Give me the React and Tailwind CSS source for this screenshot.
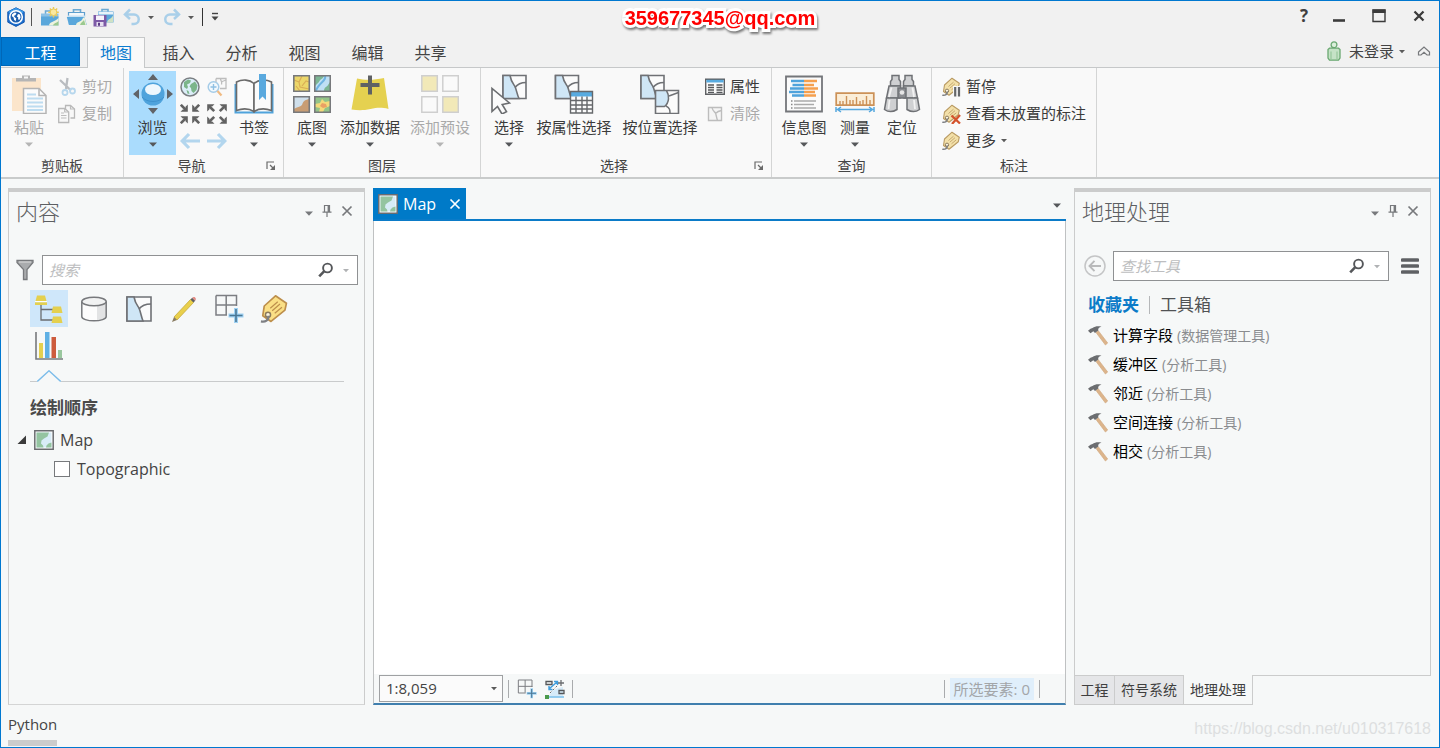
import React from "react";

const UI_FONT = "font-['Open_Sans','Noto_Sans_CJK_SC',sans-serif]";

/* ---------- shared glyphs ---------- */

function Caret({ className = "text-[#5a5a5a]", width = 8 }) {
  return (
    <svg width={width} height="5" viewBox="0 0 8 5" className={className} aria-hidden="true">
      <path d="M0 0.5h8L4 4.8z" fill="currentColor" />
    </svg>
  );
}

function Drawing({ w = 20, h = 20, children, className = "" }) {
  return (
    <svg width={w} height={h} viewBox={`0 0 ${w} ${h}`} fill="none" className={`shrink-0 ${className}`} aria-hidden="true">
      {children}
    </svg>
  );
}

/* ---------- title bar icons ---------- */

const LogoIcon = () => (
  <Drawing w={20} h={20}>
    <path d="M10 .8l8.2 4v10.4L10 19.4l-8.2-4.2V4.800z" fill="#1b6fd0" stroke="#1558ad" strokeWidth="1" />
    <path d="M10 .8l8.200 4L10 10 1.800 4.800z" fill="#3e9be8" />
    <circle cx="10" cy="10" r="6.300" fill="#1c5fae" stroke="#fff" strokeWidth="1.600" />
    <path d="M6 7.500l2.500-2 2 .6-1 1.900-1.700 1 1.300 1.500 1.200 1-.7 2.700-1.600-1.400-.4-2.300-1.700-1.200zM12 7l2 .6.600 2.900-1.300 2.500-1.300-.7.3-1.900-1.400-1z" fill="#fff" />
  </Drawing>
);

const NewProjectIcon = () => (
  <Drawing w={20} h={20}>
    <path d="M5.500 7V4h6.500v3" stroke="#6aa9d3" strokeWidth="1.500" />
    <path d="M1 6.500h17.500v4H1z" fill="#8cc1e6" />
    <path d="M1 9.500h17.500v9H1z" fill="#5aa7db" />
    <path d="M9 18.500c.5-4 5-3 9.500-7.500v7.500z" fill="#eef3df" />
    <path d="M13 18.500c1-3 3.500-2 5.500-4.500v4.500z" fill="#9bc98f" />
    <path d="M13.500 0v10.500M8.300 5.200h10.500M9.800 1.500l7.400 7.400M17.200 1.500L9.800 8.900" stroke="#ecca55" strokeWidth="1.400" />
    <circle cx="13.500" cy="5.200" r="3.300" fill="#fbe9a0" stroke="#ecca55" strokeWidth="1" />
  </Drawing>
);

const OpenProjectIcon = () => (
  <Drawing w={22} h={20}>
    <path d="M7.500 5.500V2.800h7v2.700" stroke="#6aa9d3" strokeWidth="1.600" />
    <path d="M2.500 5.500h16v4h-16z" fill="#f4f8fb" stroke="#5f9fce" strokeWidth="1.200" />
    <path d="M2 17.500V8.500h17v9z" fill="#c9e1f2" />
    <path d="M.8 10h17.700l2.300 8H3z" fill="#5aa7db" />
    <path d="M10 18c.5-4 5-2 7-7l1.500-1 2 8z" fill="#eef3df" />
    <path d="M14 18c1-3 2.500-3 4-5l1.500 5z" fill="#9bc98f" />
  </Drawing>
);

const SaveProjectIcon = () => (
  <Drawing w={22} h={20}>
    <path d="M9 4.500V2.500h6v2" stroke="#6aa9d3" strokeWidth="1.600" />
    <path d="M5 4.500h15.500v11H5z" fill="#5aa7db" />
    <path d="M5.500 5h14.500v2.500h-14.500z" fill="#e8f2f9" />
    <path d="M14 15.500c1-4 4-3 6-7v7z" fill="#cfe2c4" />
    <path d="M.5 8h13v11.500h-13z" fill="#7d5aa6" />
    <path d="M3 8.500h8v4.500H3z" fill="#f6f2fa" />
    <path d="M3.500 15h7v4h-7z" fill="#e6dff0" />
    <path d="M5 15.800h2v3H5z" fill="#5b3d85" />
  </Drawing>
);

const UndoIcon = ({ flip = false }) => (
  <Drawing w={18} h={18} className={flip ? "-scale-x-100" : ""}>
    <path d="M7 1.500L2 6.500l5 4.500M2.500 6.500H11a4.600 4.600 0 0 1 0 9.500H8.500" stroke="#a9cfe9" strokeWidth="2.500" />
  </Drawing>
);

const CustomizeIcon = () => (
  <Drawing w={8} h={10}>
    <path d="M1 1.500h6" stroke="#444" strokeWidth="1.400" />
    <path d="M0.500 4.500h7L4 8.500z" fill="#444" />
  </Drawing>
);

/* ---------- ribbon icons ---------- */

const PasteIcon = () => (
  <Drawing w={38} h={40}>
    <rect x="2" y="4" width="29" height="33" fill="#fbe5cb" />
    <path d="M6 4h20v3.500H6z" fill="#b5b5b5" />
    <path d="M12 1.500h8v5h-8z" fill="#b5b5b5" />
    <path d="M14 2.500h4v2h-4z" fill="#f8f8f8" />
    <path d="M13.500 14.500h15.500l7 7V39.500H13.500z" fill="#fbfbfb" stroke="#b4b4b4" strokeWidth="1.500" />
    <path d="M29 14.500v7h7" stroke="#b4b4b4" strokeWidth="1.500" />
    <path d="M17 20.500h9M17 24.500h16M17 28.500h16M17 32.500h16M17 36h16" stroke="#bddcf0" strokeWidth="1.800" />
  </Drawing>
);

const CutIcon = () => (
  <Drawing>
    <path d="M3 3L14 13.500M10.500 1L9 12" stroke="#b9bcc0" strokeWidth="2.300" />
    <circle cx="8" cy="15.500" r="2.500" stroke="#b7d7ed" strokeWidth="1.800" />
    <circle cx="15.500" cy="14" r="2.500" stroke="#b7d7ed" strokeWidth="1.800" />
  </Drawing>
);

const CopyIcon = () => (
  <Drawing>
    <path d="M8.500 5.500V1.500h5l4 3.500v9h-4" fill="#f8f8f8" stroke="#b8b8b8" strokeWidth="1.300" />
    <path d="M1.700 4.500h6l4 3.500v10.500h-10z" fill="#f8f8f8" stroke="#b8b8b8" strokeWidth="1.300" />
    <path d="M7.700 4.500V8h4M4 9h3M4 11.500h5.500M4 14h5.500M13.500 1.500V5h4" stroke="#bcbcbc" strokeWidth="1.200" />
  </Drawing>
);

const ExploreIcon = () => (
  <Drawing w={40} h={40}>
    <path d="M20 0l5 6H15zM20 40l5-6H15zM0 20l6-5v10zM40 20l-6-5v10z" fill="#616468" />
    <circle cx="20" cy="20" r="11.500" fill="#4fa3dc" />
    <ellipse cx="20" cy="15.500" rx="8" ry="5.500" fill="#eef7fd" />
    <path d="M9 23c5 6 17 6 22 0" stroke="#3f92cd" strokeWidth="1" />
  </Drawing>
);

const GlobeIcon = () => (
  <Drawing>
    <circle cx="10" cy="10" r="9" fill="#dceef8" stroke="#7b7f83" strokeWidth="1.500" />
    <path d="M4 5l4-2.500 3 1-1 2.500-3 1.500L8 10l-1 2-3-2zM11 7l4-2.500 2.500 4-1 4.500-3 3-2-2-.5-3-1.500-1.500zM6.500 13l2 1 1 3-2-.5z" fill="#7cb58a" />
  </Drawing>
);

const ZoomSelectionIcon = () => (
  <Drawing>
    <path d="M9 1.500h10v10H13M9 1.500V5M13.500 1.500c0 3 2 2 1 6M14 5l5-2" stroke="#bdbdbd" strokeWidth="1.300" />
    <circle cx="6.500" cy="10" r="5.300" fill="#f3f9fd" stroke="#a5cce8" strokeWidth="1.500" />
    <path d="M6.500 7v6M3.500 10h6" stroke="#8fc0e3" strokeWidth="1.400" />
    <path d="M10.500 14l4 4.500" stroke="#f0ba82" strokeWidth="2.200" />
  </Drawing>
);

function CornerArrow({ turn }) {
  return (
    <g transform={turn}>
      <path d="M.8.8L6 6" stroke="#626262" strokeWidth="2.600" />
      <path d="M7.800.5v7.300H.5l2.300-2.300L5.500 5.500V2.800z" fill="#626262" />
    </g>
  );
}

const FixedZoomInIcon = () => (
  <Drawing>
    <CornerArrow turn="translate(0 0)" />
    <CornerArrow turn="translate(20 0) scale(-1 1)" />
    <CornerArrow turn="translate(0 20) scale(1 -1)" />
    <CornerArrow turn="translate(20 20) scale(-1 -1)" />
  </Drawing>
);

const FixedZoomOutIcon = () => (
  <Drawing>
    <CornerArrow turn="translate(8 8) scale(-1 -1)" />
    <CornerArrow turn="translate(12 8) scale(1 -1)" />
    <CornerArrow turn="translate(8 12) scale(-1 1)" />
    <CornerArrow turn="translate(12 12)" />
  </Drawing>
);

const ArrowIcon = ({ flip = false }) => (
  <Drawing className={flip ? "-scale-x-100" : ""}>
    <path d="M9 3L2.200 10 9 17M2.500 10H20" stroke="#b3d6ee" strokeWidth="3.200" />
  </Drawing>
);

const BookmarkIcon = () => (
  <Drawing w={40} h={40}>
    <path d="M1.500 10v28.500H38.500V10" stroke="#4fa3dc" strokeWidth="2" />
    <path d="M2.500 8c6-3 13-2.500 17.500 1.500v28C15 34.500 8 34.500 2.500 36.500z" fill="#fbfbfb" stroke="#6b6b6b" strokeWidth="1.600" />
    <path d="M37.500 8c-6-3-13-2.500-17.500 1.500v28c5-3 12-3 17.500-1z" fill="#fbfbfb" stroke="#6b6b6b" strokeWidth="1.600" />
    <path d="M25 0h7v26l-3.500-3.500L25 26z" fill="#5aa9de" />
  </Drawing>
);

const BasemapIcon = () => (
  <Drawing w={38} h={40}>
    <rect x=".8" y="1.800" width="15.500" height="15.500" fill="#ecd76a" />
    <path d="M1 6l5 2 3-6M6 8l1 5 9 2M9 12l4-5 3 1M3 12l4 5" stroke="#d9ad55" strokeWidth="1.200" />
    <rect x="21.800" y="1.800" width="15.500" height="15.500" fill="#bfe0f5" />
    <path d="M22 2h9c-1 3-4 3-5 6l-4 4zM37 8v9h-6c0-4 3-4 4-6z" fill="#7cb694" />
    <path d="M32 2c2 5-7 7-9 15" stroke="#6fb4e2" strokeWidth="2" />
    <rect x=".8" y="22.800" width="15.500" height="15.500" fill="#c89d74" />
    <path d="M1 23h15v2c-5 1-6 3-7 6-2 2-5 2-8 4z" fill="#cfdfeb" />
    <rect x="21.800" y="22.800" width="15.500" height="15.500" fill="#93c489" />
    <path d="M22 30l5-1 2-4 3 3 5-1v5l-5 2-2 4h-4l1-4-5-1z" fill="#f3da7a" />
    <path d="M27 32l2-3 4 1 1 3-4 1z" fill="#eaa064" />
    <path d="M.8 1.800h15.500v15.500H.8zM21.800 1.800h15.500v15.500H21.800zM.8 22.800h15.500v15.500H.8zM21.800 22.800h15.500v15.500H21.800z" stroke="#77797c" strokeWidth="1.600" />
  </Drawing>
);

const AddDataIcon = () => (
  <Drawing w={38} h={40}>
    <path d="M6 4.500c9 2 17 1.500 27-.5L37.500 35c-8-2-12-1-18 0-7 1.500-12 1.500-19 .5z" fill="#e5d150" />
    <path d="M19 1.500v19M9.500 11h19" stroke="#5f6164" strokeWidth="4" />
  </Drawing>
);

const PresetIcon = () => (
  <Drawing w={38} h={40}>
    <g stroke="#cfcfcf" strokeWidth="1.500">
      <path d="M.8 1.800h15.500v15.500H.8z" fill="#f2e9b8" />
      <path d="M21.800 1.800h15.500v15.500H21.800z" fill="#fafafa" />
      <path d="M.8 22.800h15.500v15.500H.8z" fill="#fafafa" />
      <path d="M21.800 22.800h15.500v15.500H21.800z" fill="#f2e9b8" />
    </g>
  </Drawing>
);

function Parcel({ x = 0, y = 0, s = 24 }) {
  return (
    <g transform={`translate(${x} ${y})`} strokeWidth="1.600" stroke="#6f7175">
      <path d={`M0 0h${s}v${s}H0z`} fill="#fbfbfb" />
      <path d={`M0 0h7c1 6 3 8 5 11 2 5 2 8 4 ${s - 11}H0z`} fill="#cfe6f6" />
      <path d={`M12 12c3-4 6-5 ${s - 12}-5`} />
    </g>
  );
}

const SelectIcon = () => (
  <Drawing w={38} h={40}>
    <Parcel x={13} y={1.5} s={23} />
    <path d="M2 14.500v23l5.500-5 4.500 7.500 4.500-2.300-4.300-7.200 7.300-1.500z" fill="#fbfbfb" stroke="#6b6d70" strokeWidth="1.600" />
  </Drawing>
);

const SelectAttrIcon = () => (
  <Drawing w={40} h={40}>
    <Parcel x={1.5} y={1.5} s={23} />
    <path d="M16 17h23v22H16z" fill="#fbfbfb" />
    <path d="M16 17h23v5.500H16z" fill="#58abe0" />
    <path d="M16.500 17.500h22v21.500h-22zM16.500 26.500h22M16.500 31h22M16.500 35h22M22 22.500V39M28 22.500V39M33 22.500V39" stroke="#66686b" strokeWidth="1.400" />
  </Drawing>
);

const SelectLocIcon = () => (
  <Drawing w={40} h={40}>
    <Parcel x={1} y={1.5} s={23} />
    <path d="M15.500 16.500h23v23h-23z" fill="#fbfbfb" />
    <path d="M15.500 16.500h11c3 4 3 12-2 16h-9z" fill="#cfe6f6" />
    <path d="M26.500 16.500c3 5 3 12-2 16h-9M29 22l9.500-3.500M26 32c4 2 4 4 4 7.500" stroke="#6f7175" strokeWidth="1.500" />
    <path d="M15.500 16.500h23v23h-23z" stroke="#6f7175" strokeWidth="1.600" />
  </Drawing>
);

const AttributesIcon = () => (
  <Drawing>
    <path d="M.7 2.200h18.600v15H.7z" fill="#fbfbfb" stroke="#5f6164" strokeWidth="1.400" />
    <path d="M1.400 2.800h17.200v2.700H1.400z" fill="#58abe0" />
    <path d="M3 8h6M3 10.500h6M3 13h6M3 15.300h6M11.500 8h6M11.500 10.500h6M11.500 13h6M11.500 15.300h6" stroke="#55575a" strokeWidth="1.300" />
  </Drawing>
);

const ClearIcon = () => (
  <Drawing>
    <path d="M3.500 3.500h13v13h-13z" fill="#f5f5f5" stroke="#bdbdbd" strokeWidth="1.400" />
    <path d="M7 3.500c.5 3 2 4 3.500 5.500 1 3 1 5 2 7.500M10.500 9.500c2-2 3-2.500 6-3" stroke="#bdbdbd" strokeWidth="1.400" />
  </Drawing>
);

const InfographicIcon = () => (
  <Drawing w={38} h={40}>
    <path d="M1 2.500h36v35H1z" fill="#fbfbfb" stroke="#74767a" strokeWidth="1.800" />
    <path d="M6 7h13M7.500 11h11.500M5 14.500h14M4 18h15M7 21.500h12" stroke="#4fa3dc" strokeWidth="2.600" />
    <path d="M19 7h13M19 11h10M19 14.500h14M19 18h11M19 21.500h12" stroke="#f5a04f" strokeWidth="2.600" />
    <path d="M9 27h22M9 30.500h20M9 34h22" stroke="#aaa" strokeWidth="1.300" />
    <path d="M6 27h1.500M6 30.500h1.500M6 34h1.500" stroke="#888" strokeWidth="1.500" />
  </Drawing>
);

const MeasureIcon = () => (
  <Drawing w={40} h={40}>
    <path d="M1.200 19.200h37.600v12H1.200z" fill="#fbeed8" stroke="#cc9157" strokeWidth="1.700" />
    <path d="M5 31v-4M8 31v-4M11.500 31v-9M15 31v-5M18 31v-5M21.500 31v-8M25 31v-4M28 31v-5M31.500 31v-9M35 31v-5" stroke="#cc9157" strokeWidth="1.400" />
    <path d="M2 35.500h36M1 33v5M39 33v5M6 33l-3.500 2.500L6 38M34 33l3.500 2.500L34 38" stroke="#56a8de" strokeWidth="1.500" />
  </Drawing>
);

const BinocularsIcon = () => (
  <Drawing w={38} h={40}>
    <g fill="#cfd0d2" stroke="#6f7175" strokeWidth="1.500">
      <path d="M9 1.500h7v4l1.500 2V12H7.500V7.500L9 5.500zM22 1.500h7v4l1.500 2V12H20.500V7.500L22 5.500z" />
      <path d="M6 12h11.500l-.5 12H3.500zM20.500 12H32l2.500 12H21z" />
      <path d="M3.500 24H14v11.500c-4 2.500-9 2.500-12.500 0zM24 24h10.500l2 11.500c-3.500 2.500-8.500 2.500-12.500 0z" />
      <path d="M15 14h8v10h-8z" fill="#8a8c90" />
    </g>
    <circle cx="19" cy="18.500" r="2.300" fill="#e6e6e6" />
    <path d="M8.500 13.500L6 23M29.500 13.500L31 23M6.500 26l-1 9M31 26l1 9" stroke="#f2f2f2" strokeWidth="1.800" />
  </Drawing>
);

function TagShape({ s = 20, fill = "#f3e0a9", edge = "#b99a62" }) {
  return (
    <g transform={`scale(${s / 20})`}>
      <path d="M11 1.200l7.300 5-1 4.500L8 18.300 2.500 14.500 3.500 8z" fill={fill} stroke={edge} strokeWidth="1.100" strokeLinejoin="round" />
      <path d="M7.500 9.500L12.500 5.200M8.800 11.200l5.200-4.500M10.500 12.800l4.800-4" stroke={edge} strokeWidth=".8" />
      <circle cx="6" cy="13.800" r="1.700" fill="#fbf4de" stroke="#8b7a5c" strokeWidth="1" />
      <path d="M6.300 14.500c.2 3-2 4.300-5 3.700" stroke="#7e8084" strokeWidth="1.500" />
    </g>
  );
}

const PauseLabelIcon = () => (
  <Drawing>
    <TagShape />
    <path d="M12 9h8v11h-8z" fill="#f8f8f8" />
    <path d="M14.200 10v9.500M18 10v9.500" stroke="#66686b" strokeWidth="2.200" />
  </Drawing>
);

const UnplacedLabelIcon = () => (
  <Drawing>
    <TagShape />
    <path d="M10.500 11.500l8.500 8M19 11l-8 9" stroke="#d4532c" strokeWidth="2.300" />
  </Drawing>
);

const TagIcon = () => (
  <Drawing>
    <TagShape />
  </Drawing>
);

const LauncherIcon = () => (
  <Drawing w={10} h={10}>
    <path d="M1 8V1h7" stroke="#6a6a6a" strokeWidth="1.200" />
    <path d="M4 4l3.500 3.500" stroke="#6a6a6a" strokeWidth="1.300" />
    <path d="M9 4v5H4z" fill="#6a6a6a" />
  </Drawing>
);

/* ---------- pane icons ---------- */

const PinIcon = () => (
  <Drawing w={10} h={14}>
    <path d="M2.500 1.500h5v6.500h-5zM.5 8.200h9M5 8v5" stroke="#77797c" strokeWidth="1.200" />
    <path d="M6.500 1.500v6.500" stroke="#77797c" strokeWidth="1.800" />
  </Drawing>
);

const CrossIcon = ({ color = "#77797c" }) => (
  <Drawing w={12} h={12}>
    <path d="M1.500 1.500l9 9M10.500 1.500l-9 9" stroke={color} strokeWidth="1.700" />
  </Drawing>
);

const FilterIcon = () => (
  <Drawing w={18} h={22}>
    <path d="M1 1.500h16v2L11 10.500v10H7.500v-10L1 3.500z" fill="#a9abad" stroke="#77797c" strokeWidth="1.300" />
    <path d="M3 3h12" stroke="#ddd" strokeWidth="1" />
  </Drawing>
);

const SearchIcon = () => (
  <Drawing w={16} h={16}>
    <circle cx="9.500" cy="6" r="4.400" stroke="#55575a" strokeWidth="1.900" />
    <path d="M6.300 9.200L1.200 14.300" stroke="#55575a" strokeWidth="2.600" />
  </Drawing>
);

const LayerTreeIcon = () => (
  <Drawing w={30} h={30}>
    <path d="M7 11v15h12M7 15.500h12" stroke="#6b6d70" strokeWidth="1.300" />
    <g fill="#e4d04f">
      <path d="M3 1.500h8l1.500 5.500H1.500zM1 8.200h12V11H1zM19 12.500h8l1.500 6.500H17.500zM19 22.500h8l1.500 6.500H17.500z" />
    </g>
    <path d="M1 7.600h12" stroke="#fff" strokeWidth="1" />
  </Drawing>
);

const CylinderIcon = () => (
  <Drawing w={28} h={28}>
    <path d="M1.800 6.500v15c0 2.500 5.500 4.300 12 4.300s12.400-1.800 12.400-4.300v-15" fill="#fcfcfc" />
    <path d="M17 11c5-.5 9.200-2 9.200-4.500v15c0 2.500-4 3.800-9.200 4.200z" fill="#e2e3e4" />
    <path d="M1.800 6.500v15c0 2.500 5.500 4.300 12.200 4.300s12.200-1.800 12.200-4.300v-15" stroke="#77797c" strokeWidth="1.500" />
    <ellipse cx="14" cy="6.500" rx="12.200" ry="4.300" fill="#f1f2f2" stroke="#77797c" strokeWidth="1.500" />
  </Drawing>
);

const ParcelIcon = () => (
  <Drawing w={28} h={28}>
    <Parcel x={2} y={2} s={24} />
  </Drawing>
);

const PencilIcon = () => (
  <Drawing w={28} h={28}>
    <path d="M4 22L20.500 4.500l3 3L7 25z" fill="#e9d04c" stroke="#c6a93b" strokeWidth=".8" />
    <path d="M2 27l2-5L7 25z" fill="#8a7d63" />
    <path d="M20.500 4.500l1.700-1.700 3 3-1.700 1.700z" fill="#5e6063" />
    <path d="M22.200 2.800c2-2 5 .7 3 3z" fill="#e38a83" />
  </Drawing>
);

const SnapIcon = ({ s = 30 }) => (
  <svg width={s} height={s} viewBox="0 0 30 30" fill="none" aria-hidden="true" className="shrink-0">
    <path d="M2 1.500h20.500v10.500M2 1.500V21h11M12.200 1.500v19M2 11h20.500v1" stroke="#7c7e82" strokeWidth="1.500" />
    <path d="M22 14v15M14.500 21.500h15" stroke="#9fd2f3" strokeWidth="4" />
    <path d="M22 15v13M15.500 21.500h13" stroke="#4a7795" strokeWidth="1.600" />
  </svg>
);

const LabelTagIcon = () => (
  <Drawing w={30} h={30}>
    <TagShape s={30} fill="#fadf85" edge="#bd8f4c" />
  </Drawing>
);

const ChartIcon = () => (
  <Drawing w={30} h={30}>
    <path d="M2 1v27h27" stroke="#77797c" strokeWidth="1.600" />
    <path d="M5 12h4v15H5z" fill="#e4d04f" />
    <path d="M11 1h4.500v26H11z" fill="#5fb0e4" />
    <path d="M17.500 6H22v21h-4.500z" fill="#cd5b3c" />
    <path d="M24 19h4v8h-4z" fill="#9ac79e" />
  </Drawing>
);

const MapThumb = () => (
  <Drawing w={20} h={20}>
    <path d="M.8.8h18.400v18.400H.8z" fill="#fff" stroke="#6b6d70" strokeWidth="1.500" />
    <path d="M2.500 2.500h15v15h-15z" fill="#d8ecf7" />
    <path d="M2.500 2.500h12.500l-1.500 4-3.500 2-2.500 2-.5 3 2 2 .5 2h-7zM14.500 13.500l3-1v5h-5.500l.5-2z" fill="#94c4a0" />
  </Drawing>
);

const BackIcon = () => (
  <Drawing w={22} h={22}>
    <circle cx="11" cy="11" r="10" stroke="#c4c5c6" strokeWidth="1.500" />
    <path d="M10.500 5.800L5.500 11l5 5.200M6 11h11" stroke="#b9babb" strokeWidth="1.900" />
  </Drawing>
);

const HammerIcon = () => (
  <Drawing>
    <path d="M8 6.500l2.300-1.800 9.400 12.300-2.300 2z" fill="#dcb48b" stroke="#cfa67b" strokeWidth=".6" />
    <path d="M4.500 2C7 .2 10.500 0 13.500.8 11 1.300 9.800 2.600 10.300 4.600L7 7 5.300 5.200 2.500 7.200 0 4.800 2.500 2.800z" fill="#6b6d70" />
  </Drawing>
);

const ConstraintIcon = () => (
  <Drawing w={20} h={20}>
    <path d="M4 18c2-7 8-9 14-10v10z" fill="#d6ebf9" />
    <path d="M1 2.500h6v3H1zM14 11.500h5v3h-5z" stroke="#55575a" strokeWidth="1.300" />
    <path d="M4 10l8-7M9 2.500h3.500V6M4 7v3.500h3.500" stroke="#3f9ddd" strokeWidth="1.400" />
    <path d="M16 1v6M13 4h6" stroke="#6b6d70" strokeWidth="1.300" />
    <path d="M5 14l8-8" stroke="#6b6d70" strokeWidth="1" strokeDasharray="2 2" />
    <path d="M3 18h16" stroke="#8cc8ee" strokeWidth="1.800" />
    <path d="M0 16h4v4H0z" fill="#4b9a4b" />
  </Drawing>
);

const PersonIcon = () => (
  <Drawing w={14} h={20}>
    <circle cx="7" cy="3.800" r="2.900" fill="#dcefdc" stroke="#6aa871" strokeWidth="1.300" />
    <path d="M1 8.500l1.500-1.300h9L13 8.500V17l-1.500 2.200h-9L1 17z" fill="#c5e2c6" stroke="#6aa871" strokeWidth="1.300" />
    <path d="M4 10.500V18M10 10.500V18" stroke="#8dc192" strokeWidth="1" />
  </Drawing>
);

/* ---------- ribbon building blocks ---------- */

function BigButton({ icon, label, width, disabled, active, arrow = true }) {
  return (
    <button
      type="button"
      disabled={disabled}
      className={`flex h-[84px] shrink-0 flex-col items-center pt-[3px] ${width} ${active ? "bg-[#aadcfd]" : ""} ${
        disabled ? "text-[#a9a9a9]" : "text-[#3b3b3b]"
      }`}
    >
      <span className="flex h-10 items-center">{icon}</span>
      <span className="mt-px h-6 whitespace-nowrap leading-6">{label}</span>
      {arrow && (
        <span className="mt-px flex h-2 items-center">
          <Caret className={disabled ? "text-[#b5b5b5]" : "text-[#55575a]"} />
        </span>
      )}
    </button>
  );
}

function SmallButton({ icon, label, disabled, arrow }) {
  return (
    <button
      type="button"
      disabled={disabled}
      className={`flex h-[27px] items-center gap-[5px] whitespace-nowrap ${disabled ? "text-[#a9a9a9]" : "text-[#3b3b3b]"}`}
    >
      {icon}
      <span>{label}</span>
      {arrow && <Caret width={6} />}
    </button>
  );
}

function RibbonGroup({ name, width, inset, launcher, children }) {
  return (
    <section aria-label={name} className={`flex shrink-0 flex-col border-r border-[#d4d5d5] ${width}`}>
      <div className={`flex flex-1 items-start pt-[3px] ${inset}`}>{children}</div>
      <div className="flex h-[22px] items-center text-sm text-[#444]">
        <span className="flex-1 text-center">{name}</span>
        {launcher && (
          <button type="button" aria-label={`${name}选项`} className="flex w-6 justify-center">
            <LauncherIcon />
          </button>
        )}
      </div>
    </section>
  );
}

function IconButton({ label, className = "", children }) {
  return (
    <button type="button" aria-label={label} className={`flex shrink-0 items-center justify-center ${className}`}>
      {children}
    </button>
  );
}

function TitleBar() {
  return (
    <header className="grid h-9 grid-cols-[1fr_auto_1fr] items-start">
      <div className="flex h-8 items-center pl-[5px]">
        <LogoIcon />
        <span className="ml-[5px] mr-2 h-[18px] w-px bg-[#555]" />
        <IconButton label="新建工程" className="w-[20px]"><NewProjectIcon /></IconButton>
        <IconButton label="打开工程" className="ml-[6px] w-[22px]"><OpenProjectIcon /></IconButton>
        <IconButton label="保存工程" className="ml-[5px] w-[22px]"><SaveProjectIcon /></IconButton>
        <IconButton label="撤销" className="ml-2 w-[18px]"><UndoIcon /></IconButton>
        <IconButton label="撤销列表" className="ml-[7px] w-[6px]"><Caret width={6} /></IconButton>
        <IconButton label="恢复" className="ml-[9px] w-[18px]"><UndoIcon flip /></IconButton>
        <IconButton label="恢复列表" className="ml-[7px] w-[6px]"><Caret width={6} /></IconButton>
        <span className="ml-2 mr-2 h-[18px] w-px bg-[#333]" />
        <IconButton label="自定义快速访问工具栏"><CustomizeIcon /></IconButton>
      </div>
      <div className="pt-1 font-['Liberation_Sans',sans-serif] text-[20px] font-bold leading-[26px] text-[#ff0000] [paint-order:stroke_fill] [-webkit-text-stroke:6px_white] drop-shadow-[1px_2px_1px_rgba(0,0,0,0.5)]">
        359677345@qq.com
      </div>
      <div className="flex h-[30px] items-center justify-end">
        <IconButton label="帮助" className="w-[30px] text-[17px] font-bold text-[#3f3f3f]">?</IconButton>
        <IconButton label="最小化" className="w-10">
          <Drawing w={12} h={12}><path d="M0 10.500h12" stroke="#3b3b3b" strokeWidth="2.600" /></Drawing>
        </IconButton>
        <IconButton label="最大化" className="w-10">
          <Drawing w={14} h={14}><path d="M1 1h12v11.500H1z" stroke="#3b3b3b" strokeWidth="1.400" /><path d="M.5.500h13V4H.5z" fill="#3b3b3b" /></Drawing>
        </IconButton>
        <IconButton label="关闭" className="w-10">
          <Drawing w={12} h={12}><path d="M1.500 1.500l9 9M10.500 1.500l-9 9" stroke="#3b3b3b" strokeWidth="2.300" /></Drawing>
        </IconButton>
      </div>
    </header>
  );
}

function TabStrip() {
  return (
    <nav className="flex h-[31px] items-stretch border-b border-[#c6c8c9] text-base text-[#444]">
      <button type="button" className="mb-px w-[79px] border border-[#0067b8] bg-[#0078d0] pt-0.5 text-white">工程</button>
      <button type="button" className="relative z-10 -mb-px ml-[7px] w-[58px] border border-b-0 border-[#c6c8c9] bg-[#f9f9f9] text-[#0b7bd0]">地图</button>
      <div className="ml-[2px] flex pt-0.5">
        {["插入", "分析", "视图", "编辑", "共享"].map((t) => (
          <button key={t} type="button" className="w-[63px]">{t}</button>
        ))}
      </div>
      <div className="-mt-0.5 ml-auto flex items-center pr-2 text-[15px]">
        <button type="button" className="flex items-center">
          <PersonIcon />
          <span className="ml-2">未登录</span>
          <span className="ml-[5px]"><Caret width={6} /></span>
        </button>
        <IconButton label="折叠功能区" className="ml-3">
          <Drawing w={14} h={12}>
            <path d="M1.500 7L7 2l5.500 5v3H10L7 7.200 4 10H1.500z" stroke="#77797c" strokeWidth="1.200" />
          </Drawing>
        </IconButton>
      </div>
    </nav>
  );
}

function Ribbon() {
  return (
    <div className="flex h-[111px] border-b-2 border-[#c9cbcb] bg-[#f9f9f9] text-[15px]">
      <RibbonGroup name="剪贴板" width="w-[123px]" inset="pl-[7px]">
        <BigButton icon={<PasteIcon />} label="粘贴" width="w-[42px]" disabled />
        <div className="ml-[7px] mt-0.5 flex flex-col">
          <SmallButton icon={<CutIcon />} label="剪切" disabled />
          <SmallButton icon={<CopyIcon />} label="复制" disabled />
        </div>
      </RibbonGroup>
      <RibbonGroup name="导航" width="w-[160px]" inset="pl-[5px]" launcher>
        <BigButton icon={<ExploreIcon />} label="浏览" width="w-[47px]" active />
        <div className="ml-1 mt-0.5 grid grid-cols-[20px_20px] gap-x-[7px]">
          <IconButton label="全图" className="h-[27px]"><GlobeIcon /></IconButton>
          <IconButton label="缩放至所选" className="h-[27px]"><ZoomSelectionIcon /></IconButton>
          <IconButton label="固定比例放大" className="h-[27px]"><FixedZoomInIcon /></IconButton>
          <IconButton label="固定比例缩小" className="h-[27px]"><FixedZoomOutIcon /></IconButton>
          <IconButton label="上一视图" className="h-[27px]"><ArrowIcon /></IconButton>
          <IconButton label="下一视图" className="h-[27px]"><ArrowIcon flip /></IconButton>
        </div>
        <div className="ml-[6px]">
          <BigButton icon={<BookmarkIcon />} label="书签" width="w-[42px]" />
        </div>
      </RibbonGroup>
      <RibbonGroup name="图层" width="w-[197px]" inset="pl-[7px]">
        <div className="flex gap-1">
          <BigButton icon={<BasemapIcon />} label="底图" width="w-[42px]" />
          <BigButton icon={<AddDataIcon />} label="添加数据" width="w-[66px]" />
          <BigButton icon={<PresetIcon />} label="添加预设" width="w-[66px]" disabled />
        </div>
      </RibbonGroup>
      <RibbonGroup name="选择" width="w-[291px]" inset="pl-[9px]" launcher>
        <div className="flex gap-[6px]">
          <BigButton icon={<SelectIcon />} label="选择" width="w-[38px]" />
          <BigButton icon={<SelectAttrIcon />} label="按属性选择" width="w-[80px]" arrow={false} />
          <BigButton icon={<SelectLocIcon />} label="按位置选择" width="w-[80px]" arrow={false} />
        </div>
        <div className="ml-[5px] mt-0.5 flex flex-col">
          <SmallButton icon={<AttributesIcon />} label="属性" />
          <SmallButton icon={<ClearIcon />} label="清除" disabled />
        </div>
      </RibbonGroup>
      <RibbonGroup name="查询" width="w-[160px]" inset="pl-2">
        <div className="flex gap-[7px]">
          <BigButton icon={<InfographicIcon />} label="信息图" width="w-[48px]" />
          <BigButton icon={<MeasureIcon />} label="测量" width="w-[40px]" />
          <BigButton icon={<BinocularsIcon />} label="定位" width="w-[40px]" arrow={false} />
        </div>
      </RibbonGroup>
      <RibbonGroup name="标注" width="w-[165px]" inset="pl-[9px]">
        <div className="mt-0.5 flex flex-col">
          <SmallButton icon={<PauseLabelIcon />} label="暂停" />
          <SmallButton icon={<UnplacedLabelIcon />} label="查看未放置的标注" />
          <SmallButton icon={<TagIcon />} label="更多" arrow />
        </div>
      </RibbonGroup>
    </div>
  );
}

function PaneHeader({ title }) {
  return (
    <div className="flex h-[38px] items-center pl-[7px] pr-[11px]">
      <h2 className="flex-1 text-[22px] font-light leading-9 text-[#5d5f62]">{title}</h2>
      <IconButton label={`${title}菜单`} className="pt-1"><Caret className="text-[#77797c]" width={10} /></IconButton>
      <IconButton label="自动隐藏" className="ml-2"><PinIcon /></IconButton>
      <IconButton label={`关闭${title}`} className="ml-[9px]"><CrossIcon /></IconButton>
    </div>
  );
}

function SearchBox({ label }) {
  return (
    <div className="flex h-[30px] min-w-0 flex-1 items-center border border-[#8f9193] bg-white pl-[6px] pr-2">
      <input
        type="text"
        aria-label={label}
        placeholder={label}
        className="h-7 min-w-0 flex-1 bg-transparent text-[15px] italic leading-7 text-[#444] outline-none placeholder:text-[#bdbec0]"
      />
      <IconButton label={`执行${label}`}><SearchIcon /></IconButton>
      <IconButton label="搜索选项" className="ml-[9px]"><Caret width={6} className="text-[#b0b2b4]" /></IconButton>
    </div>
  );
}

const VIEWS = [
  ["按绘制顺序列出", LayerTreeIcon],
  ["按数据源列出", CylinderIcon],
  ["按选择列出", ParcelIcon],
  ["按编辑列出", PencilIcon],
  ["按捕捉列出", SnapIcon],
  ["按标注列出", LabelTagIcon],
  ["按图表列出", ChartIcon],
];

function ContentsPane() {
  return (
    <aside className="flex w-[357px] shrink-0 flex-col border border-t-4 border-[#cbcccc] border-b-[#d4d5d5]">
      <PaneHeader title="内容" />
      <div className="mt-[25px] flex items-center gap-2 pl-[7px] pr-[6px]">
        <IconButton label="筛选"><FilterIcon /></IconButton>
        <SearchBox label="搜索" />
      </div>
      <div className="ml-[21px] mt-[5px] flex w-[270px] flex-wrap gap-x-[7px]">
        {VIEWS.map(([label, Icon], i) => (
          <IconButton key={label} label={label} className={`h-[37px] w-[38px] ${i === 0 ? "bg-[#cfe7fa]" : ""}`}>
            <Icon />
          </IconButton>
        ))}
      </div>
      <div className="ml-[21px] mr-5 mt-[6px] flex items-end">
        <span className="h-px w-[7px] bg-[#c9cbcc]" />
        <Drawing w={24} h={12}>
          <path d="M.3 11.500L12 .8l11.700 10.700" stroke="#7bbcea" strokeWidth="1.400" />
        </Drawing>
        <span className="h-px flex-1 bg-[#c9cbcc]" />
      </div>
      <h3 className="ml-[21px] mt-3 text-[17px] font-bold leading-7 text-[#4a4a4a]">绘制顺序</h3>
      <ul className="mt-[3px] text-base text-[#444]">
        <li>
          <button type="button" className="flex h-[30px] items-center pl-2">
            <Drawing w={10} h={10}><path d="M9 .5V9H.5z" fill="#3b3b3b" /></Drawing>
            <span className="ml-[7px]"><MapThumb /></span>
            <span className="ml-[6px]">Map</span>
          </button>
          <ul>
            <li>
              <label className="flex h-7 items-center gap-[7px] pl-[45px]">
                <input type="checkbox" className="size-4 appearance-none border border-[#77797c] bg-white" />
                Topographic
              </label>
            </li>
          </ul>
        </li>
      </ul>
    </aside>
  );
}

function MapView() {
  return (
    <main className="flex min-w-0 flex-1 flex-col">
      <div className="flex h-[33px] items-stretch justify-between border-b-2 border-[#0b7bc8]">
        <div className="flex w-[93px] items-center bg-[#007ac8] pl-[5px] text-base text-white">
          <MapThumb />
          <span className="ml-[5px] flex-1">Map</span>
          <IconButton label="关闭 Map" className="mr-[5px]"><CrossIcon color="#ffffff" /></IconButton>
        </div>
        <IconButton label="视图列表" className="mr-1 pt-1"><Caret width={10} className="text-[#55575a]" /></IconButton>
      </div>
      <div className="flex flex-1 flex-col border-x border-b-2 border-x-[#bfc1c2] border-b-[#3f7fae]">
        <div className="flex-1 bg-white" />
        <div className="flex h-[29px] items-center px-[5px]">
          <div className="grid h-[27px] w-[124px] items-center">
            <select
              aria-label="比例尺"
              className="col-start-1 row-start-1 h-[27px] w-full appearance-none border border-[#9fa1a3] bg-[#fbfbfb] pl-[6px] text-[15px] text-[#444]"
            >
              <option>1:8,059</option>
            </select>
            <span className="pointer-events-none col-start-1 row-start-1 mr-[6px] justify-self-end"><Caret width={6} /></span>
          </div>
          <span className="ml-[5px] mr-2 h-[18px] w-px bg-[#a9abad]" />
          <IconButton label="捕捉"><SnapIcon s={20} /></IconButton>
          <IconButton label="约束" className="ml-2"><ConstraintIcon /></IconButton>
          <span className="ml-[7px] h-[18px] w-px bg-[#a9abad]" />
          <span className="ml-auto h-[18px] w-px bg-[#a9abad]" />
          <span className="mx-[5px] bg-[#e0effb] px-1 text-[15px] leading-[22px] text-[#a3a6a9]">所选要素: 0</span>
          <span className="mr-5 h-[18px] w-px bg-[#a9abad]" />
        </div>
      </div>
    </main>
  );
}

const TOOLS = [
  ["计算字段", "(数据管理工具)"],
  ["缓冲区", "(分析工具)"],
  ["邻近", "(分析工具)"],
  ["空间连接", "(分析工具)"],
  ["相交", "(分析工具)"],
];

function GeoprocessingPane() {
  return (
    <aside className="flex w-[357px] shrink-0 flex-col">
      <div className="flex flex-1 flex-col border border-b-0 border-t-4 border-[#cbcccc]">
        <PaneHeader title="地理处理" />
        <div className="mt-[21px] flex items-center pl-[9px] pr-[11px]">
          <IconButton label="后退" className="mr-[7px]"><BackIcon /></IconButton>
          <SearchBox label="查找工具" />
          <IconButton label="菜单" className="ml-3">
            <Drawing w={18} h={16}>
              <path d="M1.500 2h15M1.500 8h15M1.500 14h15" stroke="#5f6164" strokeWidth="3.600" strokeLinecap="round" />
            </Drawing>
          </IconButton>
        </div>
        <div className="mt-2 flex h-8 items-center pl-[13px] text-[17px]">
          <button type="button" className="font-bold text-[#0b7bc8]">收藏夹</button>
          <span className="mx-[10px] h-[18px] w-px bg-[#b5b7b9]" />
          <button type="button" className="text-[#505254]">工具箱</button>
        </div>
        <ul className="text-[15px] text-black">
          {TOOLS.map(([name, box]) => (
            <li key={name}>
              <button type="button" className="flex h-[29px] items-center pl-[13px]">
                <HammerIcon />
                <span className="ml-[5px]">{name}</span>
                <span className="ml-1 text-sm text-[#8a8c8f]">{box}</span>
              </button>
            </li>
          ))}
        </ul>
      </div>
      <div className="flex h-[30px] text-sm text-[#3f3f3f]">
        <button type="button" className="w-[41px] border border-[#cbcccc] bg-[#e5e6e8]">工程</button>
        <button type="button" className="w-[69px] border border-l-0 border-[#cbcccc] bg-[#e5e6e8]">符号系统</button>
        <button type="button" className="w-[69px] border border-l-0 border-t-0 border-[#cbcccc]">地理处理</button>
        <span className="flex-1 border-t border-[#cbcccc]" />
      </div>
    </aside>
  );
}

export default function App() {
  return (
    <div className={`flex min-h-screen flex-col border border-[#0078d0] bg-[#f6f8f8] ${UI_FONT}`}>
      <div className="bg-[#f1f1f1]">
        <TitleBar />
        <TabStrip />
      </div>
      <Ribbon />
      <div className="flex flex-1 gap-2 pl-[7px] pr-2 pt-[9px]">
        <ContentsPane />
        <MapView />
        <GeoprocessingPane />
      </div>
      <footer className="flex h-[42px] items-start justify-between pl-[7px] pr-2">
        <button type="button" className="mt-[6px] border-b-[6px] border-[#cccccc] pb-[3px] text-[15px] leading-[26px] text-[#444]">Python</button>
        <span className="mt-3 font-['Liberation_Sans',sans-serif] text-base leading-6 text-[#dddfe0]">
          https://blog.csdn.net/u010317618
        </span>
      </footer>
    </div>
  );
}
